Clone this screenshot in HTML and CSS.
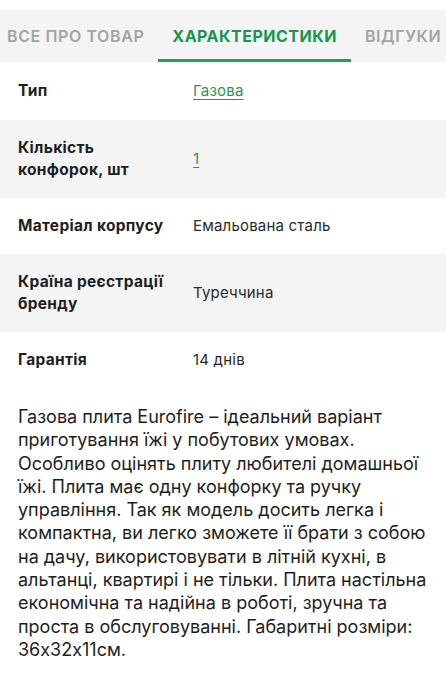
FILE: index.html
```html
<!DOCTYPE html>
<html lang="uk">
<head>
<meta charset="utf-8">
<title>Характеристики</title>
<link rel="stylesheet" href="styles.css">
</head>
<body>
<nav class="tabs">
  <div class="tab-list">
    <a class="tab">ВСЕ ПРО ТОВАР</a>
    <a class="tab tab-active">ХАРАКТЕРИСТИКИ</a>
    <a class="tab">ВІДГУКИ</a>
  </div>
</nav>
<div class="specs">
  <div class="row row-first">
    <div class="label">Тип</div>
    <div class="value"><a class="link">Газова</a></div>
  </div>
  <div class="row row-alt">
    <div class="label">Кількість конфорок, шт</div>
    <div class="value"><a class="link">1</a></div>
  </div>
  <div class="row">
    <div class="label">Матеріал корпусу</div>
    <div class="value">Емальована сталь</div>
  </div>
  <div class="row row-alt">
    <div class="label">Країна реєстрації бренду</div>
    <div class="value">Туреччина</div>
  </div>
  <div class="row">
    <div class="label">Гарантія</div>
    <div class="value">14 днів</div>
  </div>
</div>
<p class="desc">Газова плита Eurofire – ідеальний варіант приготування їжі у побутових умовах. Особливо оцінять плиту любителі домашньої їжі. Плита має одну конфорку та ручку управління. Так як модель досить легка і компактна, ви легко зможете її брати з собою на дачу, використовувати в літній кухні, в альтанці, квартирі і не тільки. Плита настільна економічна та надійна в роботі, зручна та проста в обслуговуванні. Габаритні розміри: 36x32x11см.</p>
</body>
</html>
```
FILE: styles.css
```css
html, body {
  margin: 0;
  padding: 0;
  background: #fff;
}
body {
  width: 446px;
  overflow: hidden;
  font-family: Inter, "Noto Sans", sans-serif;
  font-feature-settings: "calt" 0;
  color: #222;
  padding-top: 10px;
}
.tabs {
  background: #f4f4f4;
  height: 52px;
  overflow: hidden;
}
.tab-list {
  display: flex;
  margin-left: -7px;
  height: 52px;
}
.tab {
  flex: none;
  display: flex;
  align-items: center;
  padding: 0 14px;
  font-size: 16px;
  font-weight: 600;
  letter-spacing: 0.6px;
  color: #a3a3a3;
  box-sizing: border-box;
  border-bottom: 3px solid transparent;
  padding-top: 2px;
  white-space: nowrap;
}
.tab-active {
  color: #18964a;
  font-weight: 700;
  letter-spacing: 0.5px;
  border-bottom-color: #23a055;
}
.row {
  display: flex;
  align-items: center;
  padding: 17px 18px;
  font-size: 15px;
  line-height: 22px;
}
.row-first {
  padding-top: 18px;
  padding-bottom: 18px;
}
.row-alt {
  background: #f4f4f4;
}
.label {
  flex: none;
  width: 152px;
  margin-right: 23px;
  font-size: 15.5px;
  font-weight: 700;
  letter-spacing: 0.3px;
  color: #1e1e1e;
}
.value {
  color: #2a2a2a;
  letter-spacing: 0.2px;
}
.link {
  color: #1f9a52;
  text-decoration: underline;
  text-underline-offset: 3px;
}
.desc {
  margin: 17px 0 0;
  padding: 0 18px;
  font-size: 18px;
  line-height: 23.3px;
  color: #1e1e1e;
}
```
